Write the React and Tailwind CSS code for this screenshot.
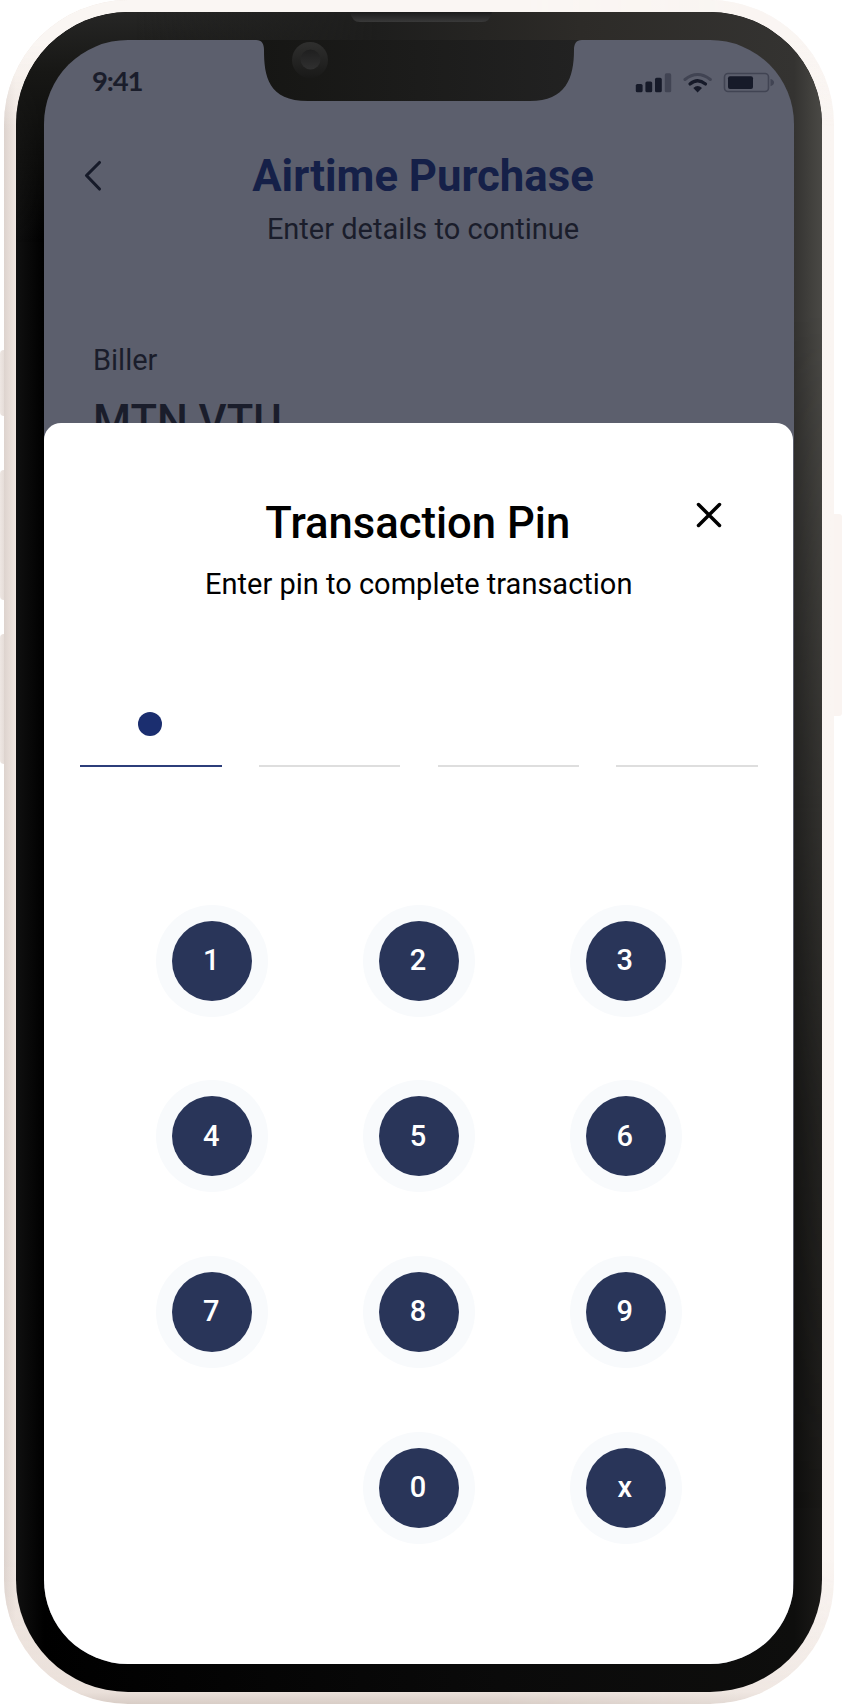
const KEYS = ["1", "2", "3", "4", "5", "6", "7", "8", "9", "", "0", "x"];

function StatusIcons() {
  return (
    <svg className="block h-[24px] w-[146px]" viewBox="634 70 146 24" fill="#161a29">
      <rect x="635.8" y="84" width="6.8" height="8.3" rx="1.6" />
      <rect x="645.4" y="81.5" width="6.8" height="10.8" rx="1.6" />
      <rect x="655" y="77.8" width="6.8" height="14.5" rx="1.6" />
      <rect x="664.8" y="73.3" width="6.4" height="19" rx="1.6" fill="#414453" />
      <g fill="none" strokeLinecap="round">
        <path d="M685 79.5 Q697.5 69.5 710.3 79.5" stroke="#414453" strokeWidth="3" />
        <path d="M690 84 Q697.5 77.5 705.5 84" stroke="#161a29" strokeWidth="3.2" />
      </g>
      <path d="M697.6 92.5 L693.3 88 Q697.6 84 702 88 Z" />
      <rect x="724.5" y="73.5" width="44" height="18" rx="3.5" fill="none" stroke="#414453" strokeWidth="1.6" />
      <rect x="728" y="76.3" width="25" height="12.8" rx="2" />
      <path d="M770.5 79 Q774 80 774 82.5 Q774 85 770.5 86.3 Z" fill="#414453" />
    </svg>
  );
}

function Notch() {
  return (
    <svg className="absolute left-[256px] top-[12px] h-[90px] w-[326px]" viewBox="256 12 326 90">
      <defs>
        <linearGradient id="notch" x1="0" x2="1">
          <stop offset="0" stopColor="#161614" />
          <stop offset="0.5" stopColor="#1c1c1b" />
          <stop offset="1" stopColor="#222222" />
        </linearGradient>
        <linearGradient id="speaker" x1="0" x2="0" y1="0" y2="1">
          <stop offset="0" stopColor="#1c1c1c" />
          <stop offset="1" stopColor="#393939" />
        </linearGradient>
        <linearGradient id="ring" x1="0" x2="0" y1="0" y2="1">
          <stop offset="0" stopColor="#2f2f2e" />
          <stop offset="1" stopColor="#191918" />
        </linearGradient>
        <linearGradient id="lens" x1="0" x2="0" y1="0" y2="1">
          <stop offset="0" stopColor="#1f1f1f" />
          <stop offset="1" stopColor="#303030" />
        </linearGradient>
      </defs>
      <path d="M256 40 C262 40 264 44 264 50 C264 76 268 101 308 101 H530 C566 101 574 78 574 50 C574 44 576 40 582 40 Z" fill="url(#notch)" />
      <path d="M350 12 H492 Q490 22 482 22 H360 Q352 22 350 12 Z" fill="url(#speaker)" />
      <circle cx="310" cy="60" r="18" fill="url(#ring)" />
      <circle cx="310.5" cy="59.5" r="10" fill="url(#lens)" />
    </svg>
  );
}

function Key({ label }) {
  if (!label) return <span className="size-[112px]" />;
  return (
    <button className="flex size-[112px] items-center justify-center rounded-full bg-[#f8fafc]">
      <span className="flex size-[80px] items-center justify-center rounded-full bg-[#293559] pr-[2px] text-[29px] font-medium leading-none text-white">
        {label}
      </span>
    </button>
  );
}

export default function App() {
  return (
    <div className="relative h-[1704px] w-[842px] overflow-hidden bg-white pl-[4px] font-['Roboto',sans-serif]">
      <i className="absolute left-0 top-[350px] h-[66px] w-[8px] rounded-l-[4px] bg-linear-to-r from-[#eee7e3] to-[#ddd3ce]" />
      <i className="absolute left-0 top-[470px] h-[130px] w-[8px] rounded-l-[4px] bg-linear-to-r from-[#eee7e3] to-[#ddd3ce]" />
      <i className="absolute left-0 top-[634px] h-[130px] w-[8px] rounded-l-[4px] bg-linear-to-r from-[#eee7e3] to-[#ddd3ce]" />
      <i className="absolute left-[832px] top-[514px] h-[202px] w-[10px] rounded-r-[3px] bg-[#faf4f1]" />

      <div className="relative h-[1704px] w-[830px] rounded-[124px] bg-[linear-gradient(to_right,#ddd3ce_0,#f1e8e2_12px,#f5efeb_50%,#faf5f2_100%)] p-[12px]">
        <i className="absolute inset-0 rounded-[124px] bg-[linear-gradient(to_bottom,#faf6f3_0,#faf6f3_40px,#faf6f300_130px,#f0e4de00_1560px,#eae0da_1692px,#d8cdc6_1704px)] [mask-image:linear-gradient(to_right,#000_0,#000_60%,#0008_100%)]" />
        <div className="relative h-[1680px] w-[806px] rounded-[112px] bg-[linear-gradient(to_right,#101010_0,#000_28px,#0a0a0a_60%,#0e0e0d_778px,#1b1a18_806px)] p-[28px]">
          <i className="absolute inset-0 rounded-[112px] bg-[linear-gradient(to_bottom,#262625,#171715_60px,transparent_230px)] [mask-image:linear-gradient(to_right,#000_0,#000_40%,transparent_80%)]" />
          <i className="absolute inset-0 rounded-[112px] bg-[linear-gradient(to_right,transparent_15%,#1e1e1d_45%,#2d2b28_70%,#343331_778px,#4a4945_806px)] [mask-image:linear-gradient(to_bottom,#000_0,#000_300px,#0009_700px,#0003_1100px,transparent_1500px)]" />
          <main className="relative flex h-[1624px] w-[750px] flex-col overflow-hidden rounded-[84px] bg-[#5c5f6d] text-[#1a1d2b]">
            <div className="flex h-[382.5px] shrink-0 flex-col">
              <div className="flex h-[84px] shrink-0 items-center justify-between pl-[48px] pr-[14px]">
                <span className="pb-[3px] font-['Lato',sans-serif] text-[27.5px] font-bold leading-none tracking-[-1.2px]">9:41</span>
                <StatusIcons />
              </div>
              <header className="relative flex shrink-0 flex-col items-center pl-[8px] pt-[26px]">
                <svg className="absolute left-[39.5px] top-[36px] h-[32px] w-[20px]" viewBox="0 0 20 32" fill="none" stroke="#161a29" strokeWidth="3.1" strokeLinecap="round" strokeLinejoin="round">
                  <path d="M15.5 2.5 L2.5 15.5 L15.5 29" />
                </svg>
                <h1 className="whitespace-nowrap text-[43.7px] font-bold leading-[52px] text-[#152048]">Airtime Purchase</h1>
                <p className="whitespace-nowrap text-[29px] leading-[54px]">Enter details to continue</p>
              </header>
              <section className="shrink-0 pl-[49px] pt-[84px]">
                <p className="text-[29px] leading-[40px]">Biller</p>
                <p className="whitespace-nowrap pt-[15px] text-[43.5px] font-medium leading-[54px]">MTN VTU</p>
              </section>
            </div>
            <section className="relative flex h-[1242px] w-[748.5px] shrink-0 flex-col rounded-t-[17px] bg-white text-black">
              <svg className="absolute left-[650px] top-[77.5px] size-[30px]" viewBox="0 0 30 30" fill="none" stroke="#000" strokeWidth="3.5" strokeLinecap="round">
                <path d="M4.5 4.5 L25.5 25.5 M25.5 4.5 L4.5 25.5" />
              </svg>
              <div className="flex flex-col items-center pl-px pt-[74.5px]">
                <h2 className="whitespace-nowrap pr-[2px] text-[43.6px] font-medium leading-[54px]">Transaction Pin</h2>
                <p className="whitespace-nowrap text-[29px] leading-[67px]">Enter pin to complete transaction</p>
              </div>
              <div className="grid grid-cols-[repeat(4,141.5px)] justify-between pl-[36px] pr-[34.5px] pt-[94px]">
                <span className="flex h-[55px] justify-center border-b-2 border-[#2c3d7a] pr-[2px]">
                  <span className="size-[24px] rounded-full bg-[#1b2e6f]" />
                </span>
                <span className="border-b-2 border-[#dedede]" />
                <span className="border-b-2 border-[#dedede]" />
                <span className="border-b-2 border-[#dedede]" />
              </div>
              <div className="grid grid-cols-[repeat(3,112px)] gap-x-[94.8px] gap-y-[63.7px] pl-[112.2px] pt-[137.5px]">
                {KEYS.map((label, i) => (
                  <Key key={i} label={label} />
                ))}
              </div>
            </section>
          </main>
        </div>
      </div>
      <Notch />
    </div>
  );
}
